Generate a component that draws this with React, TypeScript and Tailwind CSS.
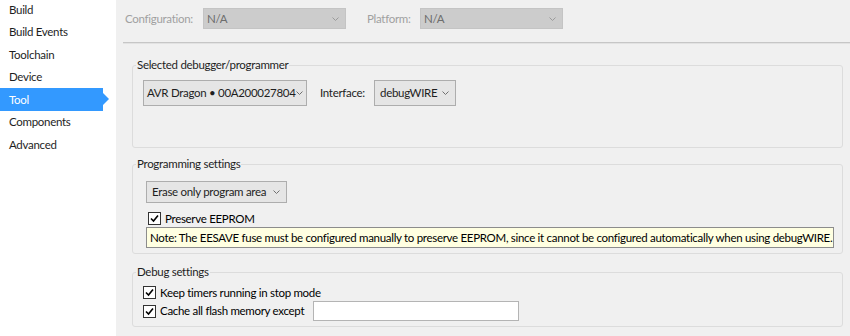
import React from 'react';

const FONT = { fontFamily: 'Lato, "Noto Sans", sans-serif' };

const NAV = ['Build', 'Build Events', 'Toolchain', 'Device', 'Tool', 'Components', 'Advanced'];

function Chevron({ color = '#707070' }: { color?: string }) {
    return (
        <svg width="7" height="4" viewBox="0 0 7 4" className="shrink-0">
            <path d="M0.5 0.5 L3.5 3.5 L6.5 0.5" fill="none" stroke={color} strokeWidth="1" />
        </svg>
    );
}

function Combo({ value, className }: { value: string; className: string }) {
    return (
        <div className={`flex items-center justify-between border border-[#adadad] bg-[#e5e5e5] text-[#1e1e1e] ${className}`}>
            <span className="whitespace-nowrap">{value}</span>
            <Chevron />
        </div>
    );
}

function DisabledCombo({ className }: { className: string }) {
    return (
        <div className={`flex items-center justify-between h-[21px] border border-[#c4c4c4] bg-[#cccccc] pl-[3px] pr-[6px] text-[#6d6d6d] ${className}`}>
            <span>N/A</span>
            <Chevron color="#9a9a9a" />
        </div>
    );
}

function Check({ label }: { label: string }) {
    return (
        <label className="flex items-center gap-[4px] h-[17px]">
            <span className="flex items-center justify-center w-[13px] h-[13px] border border-[#333] bg-white">
                <svg width="9" height="9" viewBox="0 0 9 9">
                    <path d="M1 4.5 L3.5 7 L8 1.5" fill="none" stroke="#000" strokeWidth="1.6" />
                </svg>
            </span>
            <span className="whitespace-nowrap">{label}</span>
        </label>
    );
}

function Group({ title, className, children }: { title: string; className: string; children: React.ReactNode }) {
    return (
        <fieldset className={`border border-[#dcdcdc] rounded-[3px] ${className}`}>
            <legend className="ml-[3px] px-[1px] leading-[16px] text-[#1e1e1e]">{title}</legend>
            {children}
        </fieldset>
    );
}

export default function App() {
    return (
        <div className="flex w-[850px] h-[336px] overflow-hidden bg-[#f0f0f0] text-[11.5px] tracking-[-0.3px]" style={FONT}>
            {/* Sidebar */}
            <div className="w-[116px] shrink-0 bg-white">
                <div className="-mt-[2px]">
                    {NAV.map(item => item === 'Tool' ? (
                        <div key={item} className="relative flex items-center h-[22.5px]">
                            <div className="flex items-center w-[103px] h-full bg-[#3399ff] pl-[9px] text-white">{item}</div>
                            <div className="w-0 h-0 border-y-[6px] border-y-transparent border-l-[6px] border-l-[#3399ff]" />
                        </div>
                    ) : (
                        <div key={item} className="flex items-center h-[22.5px] pl-[9px] text-[#1e1e1e]">{item}</div>
                    ))}
                </div>
            </div>

            {/* Main */}
            <div className="flex-1 flex flex-col">
                <div className="flex items-center h-[42px] pl-[9px] pb-[5px] text-[#a0a0a0] whitespace-nowrap">
                    <span className="w-[78px]">Configuration:</span>
                    <DisabledCombo className="w-[143px]" />
                    <span className="ml-[21px] w-[53px]">Platform:</span>
                    <DisabledCombo className="w-[143px]" />
                </div>
                <div className="ml-[7px] h-[2px] border-t border-t-[#c6c6c6] border-b border-b-[#e2e2e2]" />

                <div className="flex flex-col pl-[16px] pr-[7px] pt-[13px]">
                    <Group title="Selected debugger/programmer" className="h-[91px]">
                        <div className="flex items-center pl-[10px] pt-[7px]">
                            <Combo value="AVR Dragon • 00A200027804" className="w-[164px] h-[26px] pl-[3px] pr-[5px]" />
                            <span className="ml-[13px] w-[54px] text-[#1e1e1e]">Interface:</span>
                            <Combo value="debugWIRE" className="w-[82px] h-[26px] pl-[5px] pr-[6px]" />
                        </div>
                    </Group>

                    <Group title="Programming settings" className="mt-[8px] h-[98px]">
                        <div className="flex flex-col items-start pl-[13px] pt-[9px]">
                            <Combo value="Erase only program area" className="w-[141px] h-[22px] pl-[5px] pr-[6px]" />
                            <div className="mt-[7px] pl-[2px]">
                                <Check label="Preserve EEPROM" />
                            </div>
                            <div className="w-[688px] h-[21px] flex items-center border border-[#8c8c8c] bg-[#ffffe1] pl-[3px] text-black whitespace-nowrap">
                                Note: The EESAVE fuse must be configured manually to preserve EEPROM, since it cannot be configured automatically when using debugWIRE.
                            </div>
                        </div>
                    </Group>

                    <Group title="Debug settings" className="mt-[10px] h-[63px]">
                        <div className="flex flex-col pl-[10px] pt-[4px]">
                            <Check label="Keep timers running in stop mode" />
                            <div className="flex items-center">
                                <div className="w-[170px]">
                                    <Check label="Cache all flash memory except" />
                                </div>
                                <input className="w-[206px] h-[20px] border border-[#b4b4b4] bg-white outline-none" />
                            </div>
                        </div>
                    </Group>
                </div>
            </div>
        </div>
    );
}
